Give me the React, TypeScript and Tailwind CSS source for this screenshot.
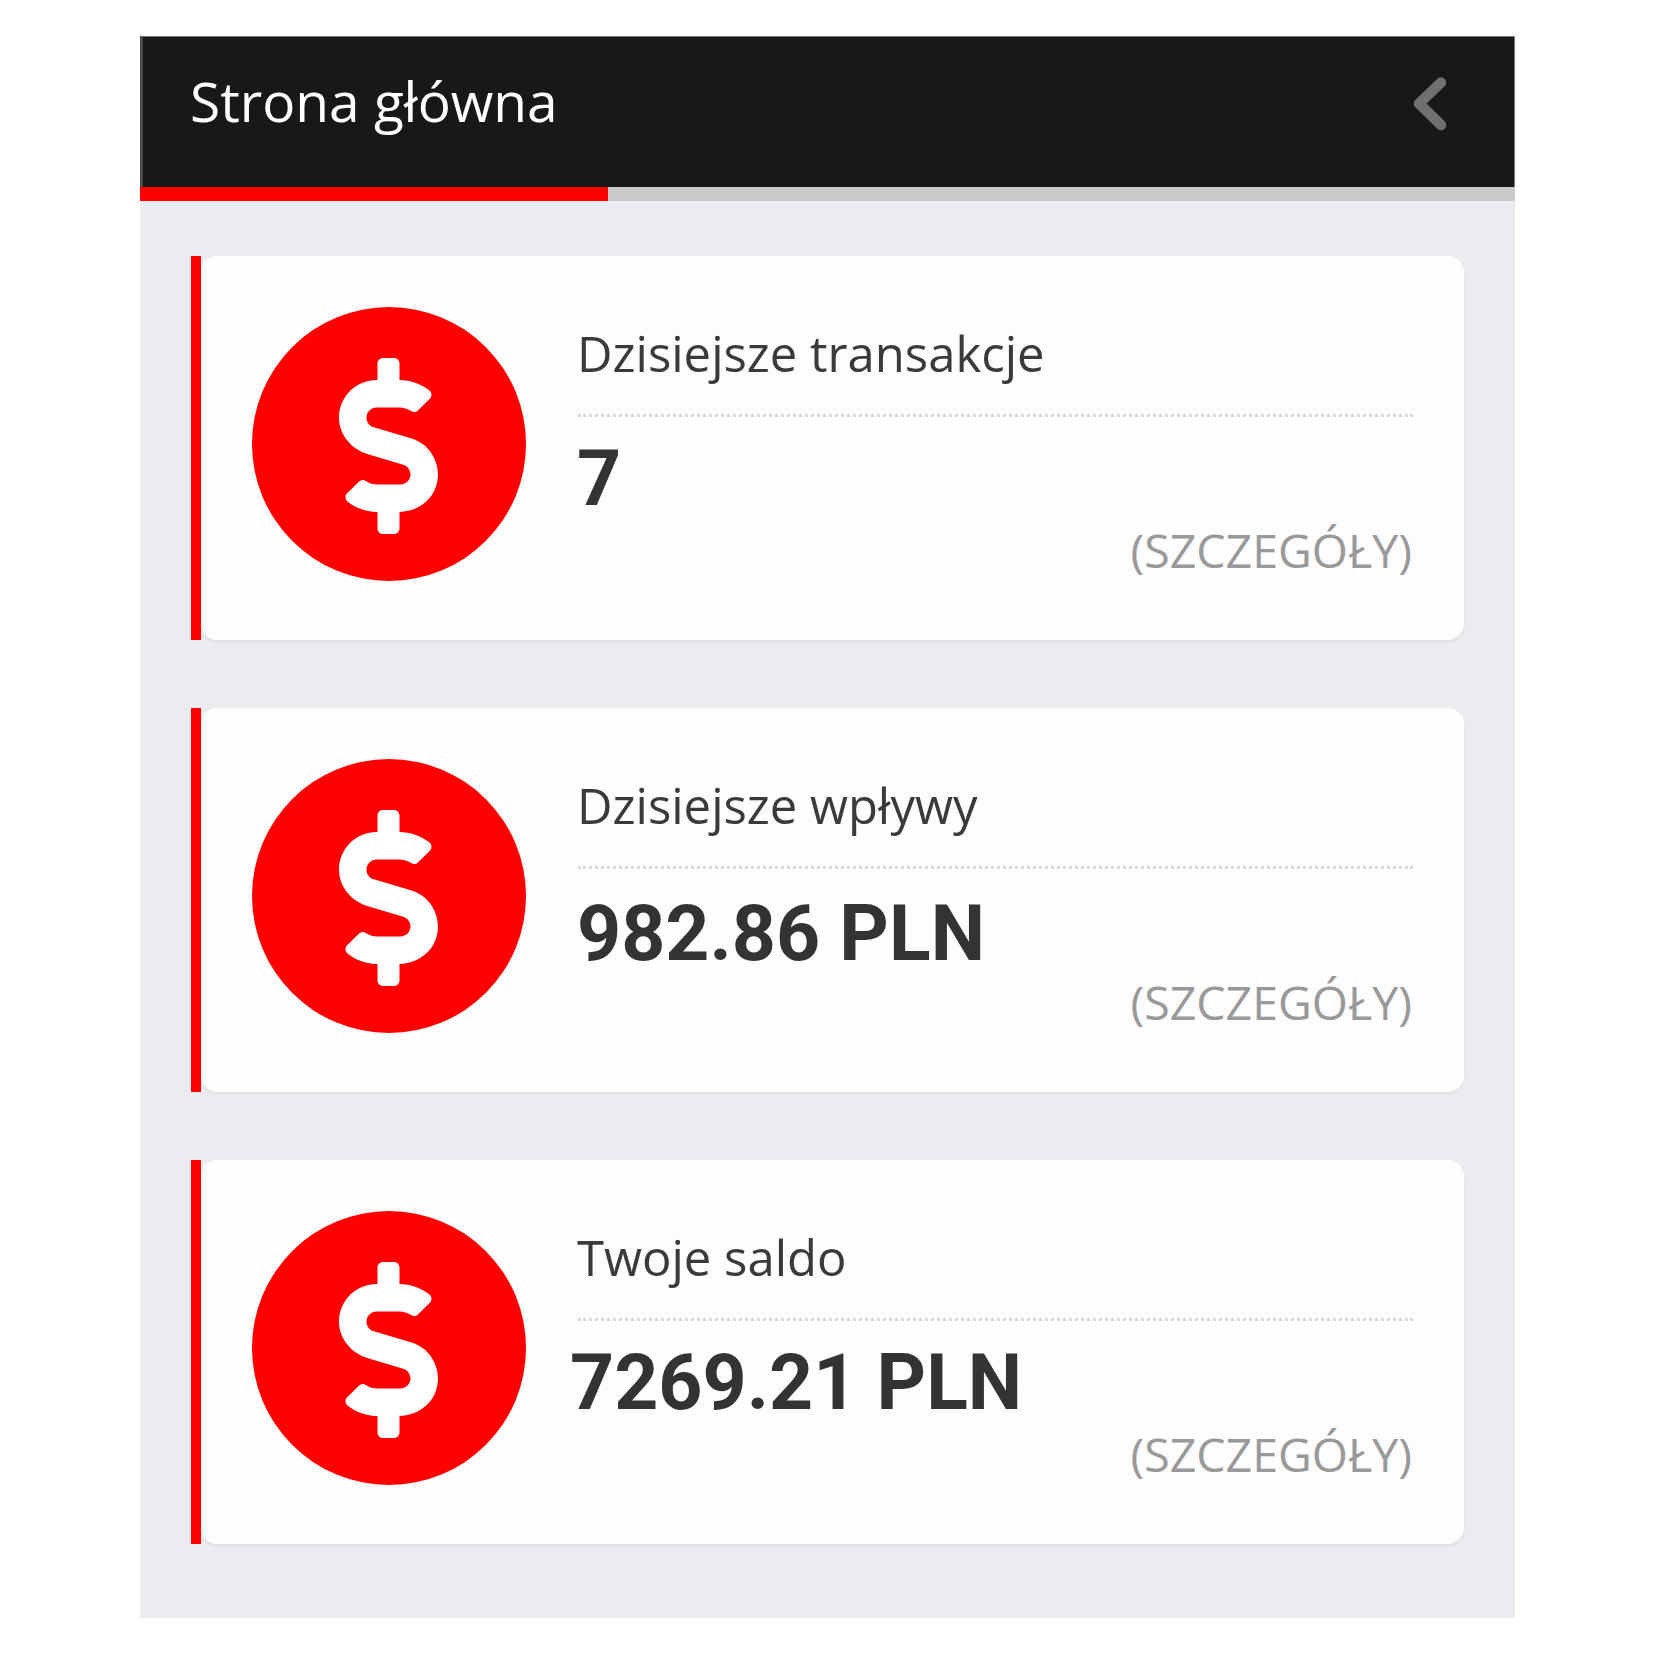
import { FaDollarSign } from "react-icons/fa";

const sans = "font-['Open_Sans','Noto_Sans',sans-serif]";

function Card({ title, value, valueClass }: { title: string; value: string; valueClass: string }) {
  return (
    <div className="flex h-[384px] border-l-[10px] border-[#ff0000]">
      <div className="flex flex-1 rounded-[16px] bg-[#fdfdfd] pt-[51px] pl-[51px] pr-[51px] shadow-[0_2px_3px_rgba(0,0,0,0.06)]">
        <div className="flex h-[274px] w-[274px] shrink-0 items-center justify-center rounded-full bg-[#ff0000]">
          <FaDollarSign className="mr-[2px] mt-[4px] text-white" style={{ width: 99, height: 176 }} />
        </div>
        <div className="ml-[52px] flex flex-1 flex-col">
          <div className={`${sans} -ml-[1px] h-[107px] pt-[18px] text-[49px] leading-[56px] text-[#3a3a3a]`}>{title}</div>
          <div className="h-0 border-t-[3px] border-dotted border-[#d8d8d8]" />
          <div className="h-[103px]">
            <div className={`font-['Roboto',sans-serif] text-[77px] font-bold leading-[84px] text-[#333333] ${valueClass}`}>{value}</div>
          </div>
          <div className={`${sans} pr-[1px] text-right text-[46.5px] leading-[60px] text-[#999999]`}>(SZCZEGÓŁY)</div>
        </div>
      </div>
    </div>
  );
}

export default function App() {
  return (
    <div className="min-h-[1654px] bg-white px-[140px] pt-[36px]">
      <div className="w-[1375px] bg-[#ebecf0]">
        <div className="flex h-[151px] items-start justify-between border-l-[3px] border-r border-t border-l-[#4a4a4a] border-r-[#777777] border-t-[#777777] bg-[#181818] pl-[47px] pr-[64px] pt-[28px]">
          <div className={`${sans} text-[55px] leading-[72px] text-white`}>Strona główna</div>
          <svg width="40" height="60" viewBox="0 0 40 60" className="mt-[9px]">
            <polyline points="31,8.5 9,29.5 31,51" fill="none" stroke="#707070" strokeWidth="10.5" strokeLinecap="round" strokeLinejoin="round" />
          </svg>
        </div>
        <div className="h-[14px] bg-[#c9c9c9]">
          <div className="h-full w-[468px] bg-[#ff0000]" />
        </div>
        <div className="flex flex-col gap-[68px] pb-[74px] pl-[51px] pr-[51px] pt-[55px]">
          <Card title="Dzisiejsze transakcje" value="7" valueClass="-ml-[1px] pt-[20px]" />
          <Card title="Dzisiejsze wpływy" value="982.86 PLN" valueClass="-ml-[1px] pt-[23px]" />
          <Card title="Twoje saldo" value="7269.21 PLN" valueClass="-ml-[8px] pt-[20px]" />
        </div>
      </div>
    </div>
  );
}
